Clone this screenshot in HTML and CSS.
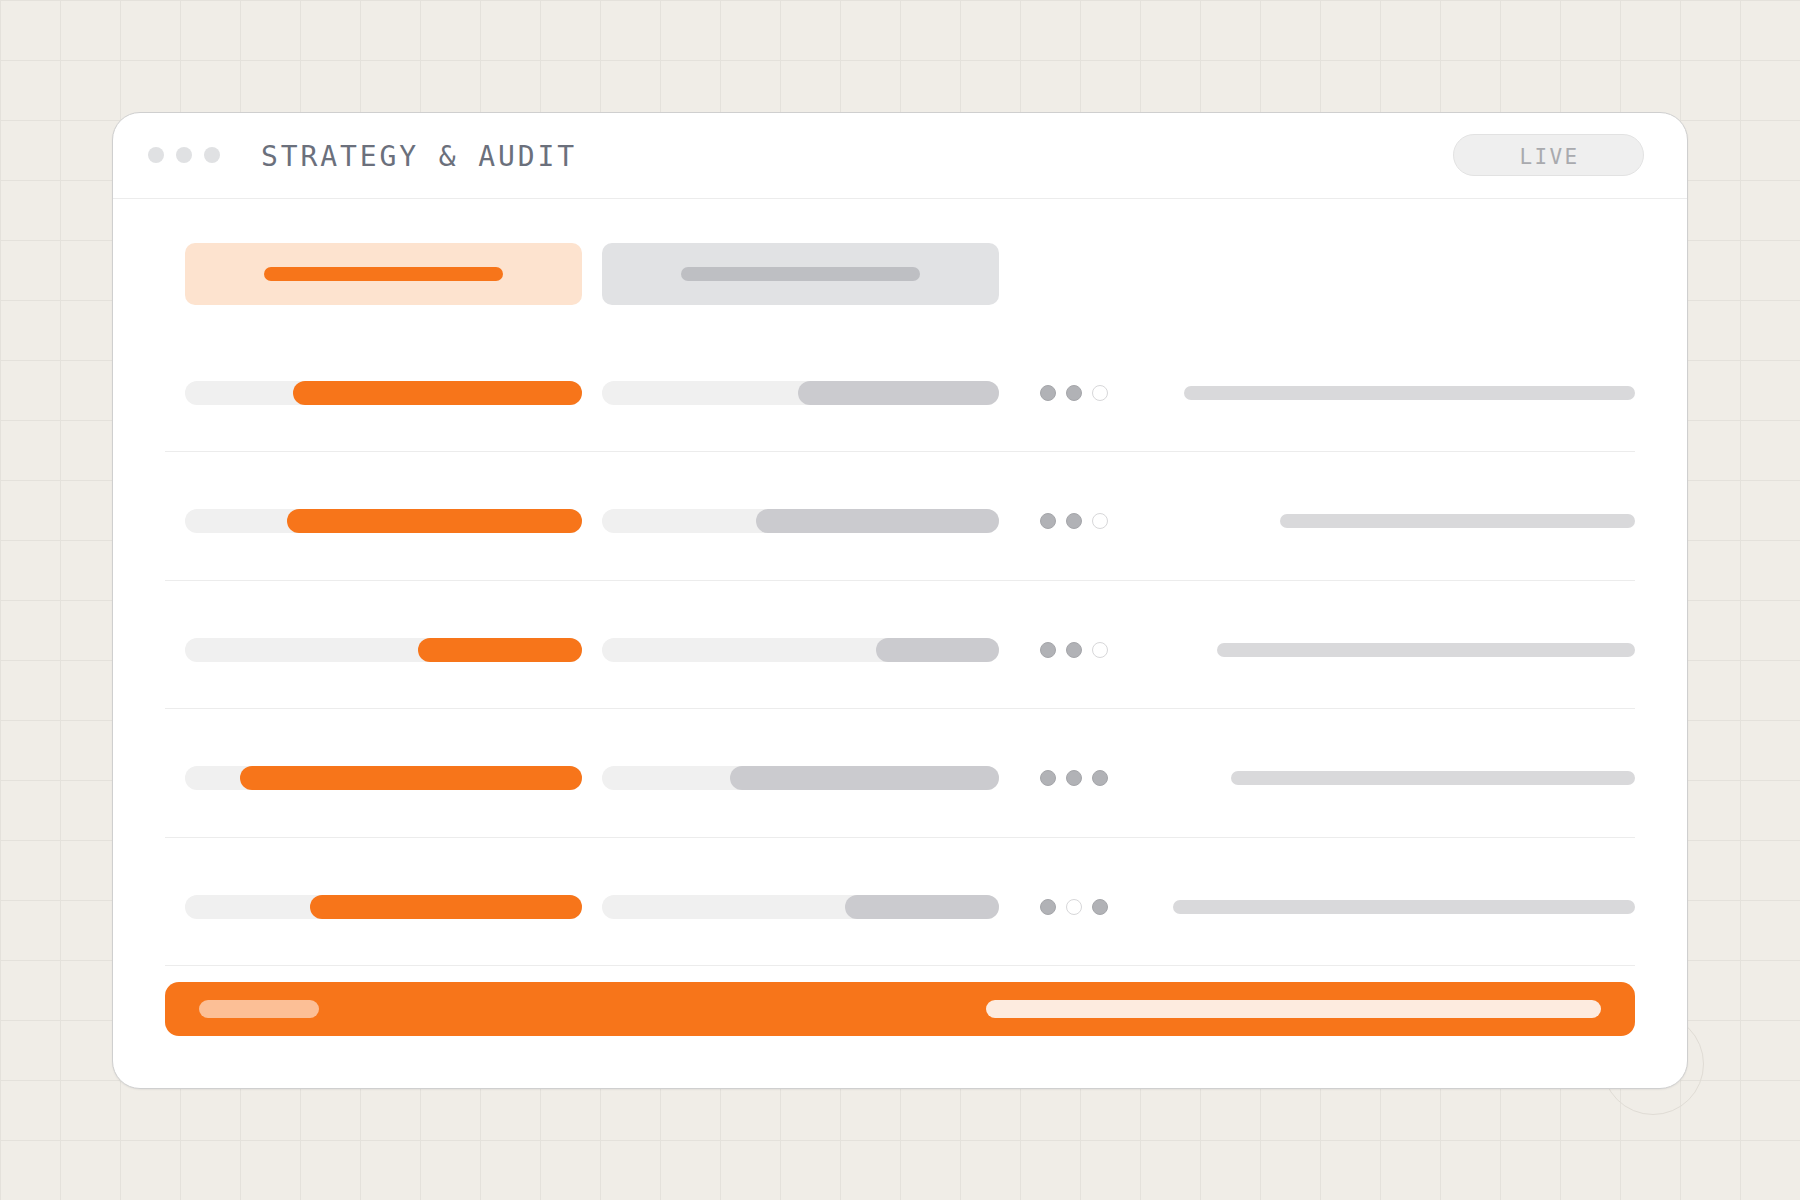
FILE: index.html
```html
<!DOCTYPE html>
<html lang="en">
<head>
<meta charset="utf-8">
<title>Strategy &amp; Audit</title>
<link rel="stylesheet" href="styles.css">
</head>
<body>
<div class="stage">
  <div class="ring"></div>
  <div class="card">
    <header class="head">
      <div class="lights"><span></span><span></span><span></span></div>
      <h1 class="title">STRATEGY &amp; AUDIT</h1>
      <div class="live">LIVE</div>
    </header>
    <main class="content">
      <div class="tabs">
        <div class="tab tab-active"><span class="tab-bar"></span></div>
        <div class="tab tab-idle"><span class="tab-bar"></span></div>
      </div>
      <div class="rows">
        <div class="row">
          <div class="track"><div class="fill fill-orange" style="width:72.9%"></div></div>
          <div class="track"><div class="fill fill-gray" style="width:50.7%"></div></div>
          <div class="dots"><i class="on"></i><i class="on"></i><i class="off"></i></div>
          <div class="note"><span class="note-bar" style="width:451px"></span></div>
        </div>
        <div class="row">
          <div class="track"><div class="fill fill-orange" style="width:74.3%"></div></div>
          <div class="track"><div class="fill fill-gray" style="width:61.2%"></div></div>
          <div class="dots"><i class="on"></i><i class="on"></i><i class="off"></i></div>
          <div class="note"><span class="note-bar" style="width:355px"></span></div>
        </div>
        <div class="row">
          <div class="track"><div class="fill fill-orange" style="width:41.4%"></div></div>
          <div class="track"><div class="fill fill-gray" style="width:31%"></div></div>
          <div class="dots"><i class="on"></i><i class="on"></i><i class="off"></i></div>
          <div class="note"><span class="note-bar" style="width:418px"></span></div>
        </div>
        <div class="row">
          <div class="track"><div class="fill fill-orange" style="width:86.2%"></div></div>
          <div class="track"><div class="fill fill-gray" style="width:67.8%"></div></div>
          <div class="dots"><i class="on"></i><i class="on"></i><i class="on"></i></div>
          <div class="note"><span class="note-bar" style="width:404px"></span></div>
        </div>
        <div class="row">
          <div class="track"><div class="fill fill-orange" style="width:68.6%"></div></div>
          <div class="track"><div class="fill fill-gray" style="width:38.8%"></div></div>
          <div class="dots"><i class="on"></i><i class="off"></i><i class="on"></i></div>
          <div class="note"><span class="note-bar" style="width:462px"></span></div>
        </div>
      </div>
      <div class="summary">
        <span class="sum-left"></span>
        <span class="sum-right"></span>
      </div>
    </main>
  </div>
</div>
</body>
</html>
```

FILE: styles.css
```css
* { box-sizing: border-box; }

html, body {
  margin: 0;
  padding: 0;
}

body {
  width: 1800px;
  height: 1200px;
  background-color: #f0ede7;
  background-image:
    linear-gradient(to right, #e4e1db 1px, transparent 1px),
    linear-gradient(to bottom, #e4e1db 1px, transparent 1px);
  background-size: 60px 60px;
  font-family: "DejaVu Sans Mono", "Liberation Mono", monospace;
  display: flex;
  align-items: center;
  justify-content: center;
  overflow: hidden;
}

.stage {
  position: relative;
  width: 1576px;
  height: 977px;
}

.ring {
  position: absolute;
  right: -16px;
  bottom: -26px;
  width: 102px;
  height: 102px;
  border: 1.5px solid #e0dcd5;
  border-radius: 50%;
}

.card {
  position: relative;
  width: 100%;
  height: 100%;
  background: #ffffff;
  border: 1px solid #cfcfcf;
  border-radius: 28px;
  box-shadow: 0 1px 2px rgba(0, 0, 0, 0.06);
  display: flex;
  flex-direction: column;
  overflow: hidden;
}

/* header */
.head {
  height: 86px;
  border-bottom: 1px solid #ececec;
  display: flex;
  align-items: center;
  padding: 0 43px 0 35px;
}

.lights {
  display: flex;
  gap: 12px;
}

.lights span {
  width: 16px;
  height: 16px;
  border-radius: 50%;
  background: #e0e1e3;
}

.title {
  margin: 0 0 0 41px;
  padding-top: 4px;
  font-size: 28px;
  font-weight: 400;
  letter-spacing: 2.9px;
  color: #6b707c;
  line-height: 1;
}

.live {
  margin-left: auto;
  width: 191px;
  height: 42px;
  border-radius: 21px;
  background: #efefef;
  border: 1px solid #e2e2e2;
  display: flex;
  align-items: center;
  justify-content: center;
  font-size: 21px;
  letter-spacing: 2.4px;
  padding: 4px 0 0 2px;
  color: #a9aaae;
}

/* body */
.content {
  flex: 1;
  padding: 44px 52px 51px;
  display: flex;
  flex-direction: column;
}

.tabs {
  display: flex;
  gap: 20px;
  padding-left: 20px;
  margin-bottom: 19px;
}

.tab {
  width: 397px;
  height: 62px;
  border-radius: 10px;
  display: flex;
  align-items: center;
  justify-content: center;
}

.tab-bar {
  width: 239px;
  height: 14px;
  border-radius: 7px;
}

.tab-active { background: #fde3cf; }
.tab-active .tab-bar { background: #f7751a; }
.tab-idle { background: #e1e2e4; }
.tab-idle .tab-bar { background: #bebfc3; }

.rows {
  display: flex;
  flex-direction: column;
}

.row {
  display: flex;
  align-items: center;
  padding: 57px 0 46.5px 20px;
  border-bottom: 1px solid #ececec;
}

.track {
  width: 397px;
  height: 24px;
  border-radius: 12px;
  background: #f0f0f0;
  display: flex;
  justify-content: flex-end;
}

.track + .track { margin-left: 20px; }

.fill {
  height: 100%;
  border-radius: 12px;
}

.fill-orange { background: #f7751a; }
.fill-gray { background: #cbcbcf; }

.dots {
  display: flex;
  gap: 10px;
  margin-left: 41px;
}

.dots i {
  width: 16px;
  height: 16px;
  border-radius: 50%;
}

.dots .on {
  background: #b1b2b6;
  border: 1px solid #a5a6aa;
}

.dots .off {
  background: #ffffff;
  border: 1.5px solid #d7d7d9;
}

.note {
  flex: 1;
  display: flex;
  justify-content: flex-end;
}

.note-bar {
  height: 14px;
  border-radius: 7px;
  background: #d9d9db;
}

/* summary bar */
.summary {
  margin-top: 15.5px;
  height: 54px;
  border-radius: 14px;
  background: #f7751a;
  display: flex;
  align-items: center;
  justify-content: space-between;
  padding: 0 34px;
}

.sum-left {
  width: 120px;
  height: 18px;
  border-radius: 9px;
  background: #fcbf96;
}

.sum-right {
  width: 615px;
  height: 18px;
  border-radius: 9px;
  background: #fdebdf;
}
```
